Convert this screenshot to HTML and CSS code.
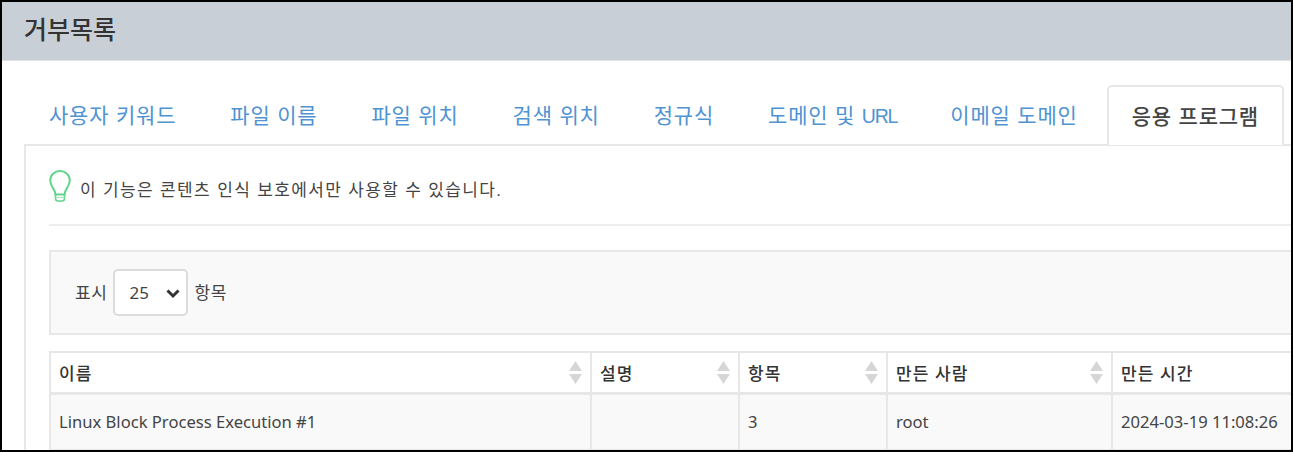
FILE: index.html
```html
<!DOCTYPE html>
<html lang="ko">
<head>
    <meta charset="UTF-8">
    <meta name="viewport" content="width=device-width, initial-scale=1.0">
    <title>거부목록</title>
    <link rel="stylesheet" href="styles.css">
</head>
<body>
<div class="frame">
    <h1 class="page-title">거부목록</h1>

    <div class="content">
        <ul class="tabs">
            <li class="tab">사용자 키워드</li>
            <li class="tab">파일 이름</li>
            <li class="tab">파일 위치</li>
            <li class="tab">검색 위치</li>
            <li class="tab">정규식</li>
            <li class="tab tab-url">도메인 및 <span class="tab-latin">URL</span></li>
            <li class="tab">이메일 도메인</li>
            <li class="tab tab-active">응용 프로그램</li>
        </ul>

        <div class="tab-panel">
            <div class="notice">
                <svg class="bulb" width="22" height="32" viewBox="0 0 22 32" fill="none" stroke="#62d48c" stroke-width="2">
                    <path d="M6.5 24.5C6.5 19.5 1.2 16.5 1.2 10.6C1.2 5 5.6 1 11 1C16.4 1 20.8 5 20.8 10.6C20.8 16.5 15.5 19.5 15.5 24.5Z"/>
                    <path d="M6.5 24.5V28.5C6.5 30 7.8 31 9 31H13C14.2 31 15.5 30 15.5 28.5V24.5" stroke-width="1.6"/>
                    <path d="M6.5 27.5H15.5" stroke-width="1.2" stroke="#a9e6bf"/>
                </svg>
                <span>이 기능은 콘텐츠 인식 보호에서만 사용할 수 있습니다.</span>
            </div>

            <div class="filter-bar">
                <label class="page-size">
                    <span class="size-label">표시</span>
                    <span class="select-wrap">
                        <select class="size-select">
                            <option>25</option>
                            <option>50</option>
                        </select>
                        <svg class="chevron" width="14" height="10" viewBox="0 0 14 10" fill="none" stroke="#333" stroke-width="3">
                            <path d="M1.5 1.5L7 7L12.5 1.5"/>
                        </svg>
                    </span>
                    <span class="size-label">항목</span>
                </label>
            </div>

            <table class="list-table">
                <colgroup>
                    <col class="col-name">
                    <col class="col-desc">
                    <col class="col-items">
                    <col class="col-owner">
                    <col class="col-time">
                </colgroup>
                <thead>
                    <tr>
                        <th><div class="th-inner">이름<svg class="sort" width="13" height="23" viewBox="0 0 13 23"><path d="M6.5 0L13 10H0Z"/><path d="M0 13H13L6.5 23Z"/></svg></div></th>
                        <th><div class="th-inner">설명<svg class="sort" width="13" height="23" viewBox="0 0 13 23"><path d="M6.5 0L13 10H0Z"/><path d="M0 13H13L6.5 23Z"/></svg></div></th>
                        <th><div class="th-inner">항목<svg class="sort" width="13" height="23" viewBox="0 0 13 23"><path d="M6.5 0L13 10H0Z"/><path d="M0 13H13L6.5 23Z"/></svg></div></th>
                        <th><div class="th-inner">만든 사람<svg class="sort" width="13" height="23" viewBox="0 0 13 23"><path d="M6.5 0L13 10H0Z"/><path d="M0 13H13L6.5 23Z"/></svg></div></th>
                        <th><div class="th-inner">만든 시간</div></th>
                    </tr>
                </thead>
                <tbody>
                    <tr>
                        <td>Linux Block Process Execution #1</td>
                        <td></td>
                        <td>3</td>
                        <td>root</td>
                        <td>2024-03-19 11:08:26</td>
                    </tr>
                </tbody>
            </table>
        </div>
    </div>
</div>
</body>
</html>
```

FILE: styles.css
```css
:root {
    --line: #e7e7e7;
    --link: #4f93d2;
    --text: #444;
    --ko-font: "Liberation Sans", "Noto Sans CJK KR", sans-serif;
}

* {
    margin: 0;
    padding: 0;
    box-sizing: border-box;
}

body {
    font-family: "Noto Sans", "Noto Sans CJK KR", sans-serif;
    background-color: #fff;
    color: var(--text);
}

.frame {
    width: 1293px;
    height: 452px;
    border: 2px solid #000;
    overflow: hidden;
    background-color: #fff;
}

.page-title {
    height: 59px;
    padding-left: 22px;
    background-color: #c8cfd6;
    border-bottom: 1px solid #dfe3e7;
    font-family: var(--ko-font);
    font-size: 25px;
    font-weight: 500;
    line-height: 56px;
    color: #333;
}

.content {
    padding: 24px 0 0 22px;
    width: 1400px;
}

.tabs {
    display: flex;
    gap: 4px;
    height: 60px;
    list-style: none;
    position: relative;
    z-index: 1;
}

.tab {
    padding: 0 25px;
    font-family: var(--ko-font);
    font-size: 21px;
    letter-spacing: 0.8px;
    line-height: 62px;
    color: var(--link);
    white-space: nowrap;
}

.tab-url {
    padding-right: 24px;
}

.tab-latin {
    font-size: 19.5px;
    letter-spacing: -1.2px;
}

.tab-active {
    height: 60px;
    border: 2px solid var(--line);
    border-bottom: 0;
    border-radius: 5px 5px 0 0;
    padding: 0 23px;
    line-height: 60px;
    font-weight: 500;
    background-color: #fff;
    color: #444;
}

.tab-panel {
    margin-top: -1px;
    border-top: 2px solid var(--line);
    border-left: 2px solid var(--line);
    padding: 0 0 0 23px;
}

.notice {
    display: flex;
    align-items: center;
    gap: 9px;
    height: 80px;
    padding-top: 7px;
    border-bottom: 2px solid #eee;
    font-family: var(--ko-font);
    font-size: 17px;
    letter-spacing: 1.35px;
    color: #444;
}

.bulb {
    flex: none;
    margin-top: -6px;
}

.filter-bar {
    display: flex;
    align-items: center;
    height: 85px;
    margin-top: 24px;
    padding-left: 24px;
    background-color: #f9f9f9;
    border: 2px solid var(--line);
}

.page-size {
    display: flex;
    align-items: center;
    gap: 6px;
    font-family: var(--ko-font);
    font-size: 17px;
    letter-spacing: 0.6px;
}

.size-label {
    margin-top: -3px;
}

.select-wrap {
    position: relative;
    display: block;
    width: 75px;
    height: 47px;
}

.size-select {
    width: 100%;
    height: 100%;
    padding-left: 14px;
    appearance: none;
    border: 2px solid #dcdcdc;
    border-radius: 5px;
    background-color: #fff;
    font-family: "Noto Sans", sans-serif;
    font-size: 17px;
    color: var(--text);
}

.chevron {
    position: absolute;
    right: 8px;
    top: 20px;
}

.list-table {
    width: 1352px;
    margin-top: 16px;
    border-collapse: collapse;
    table-layout: fixed;
    font-size: 16.6px;
}

.col-name { width: 541px; }
.col-desc { width: 148px; }
.col-items { width: 148px; }
.col-owner { width: 225px; }

.list-table th,
.list-table td {
    border: 2px solid var(--line);
    padding: 0 8px;
    text-align: left;
    white-space: nowrap;
}

.list-table th {
    height: 41px;
    border-bottom-width: 3px;
    font-family: var(--ko-font);
    font-size: 17px;
    font-weight: 500;
    letter-spacing: 1px;
    color: #333;
}

.th-inner {
    display: flex;
    align-items: center;
    justify-content: space-between;
}

.sort {
    fill: #d6d6d6;
}

.list-table td {
    height: 57px;
    background-color: #f9f9f9;
    color: #444;
}
```
